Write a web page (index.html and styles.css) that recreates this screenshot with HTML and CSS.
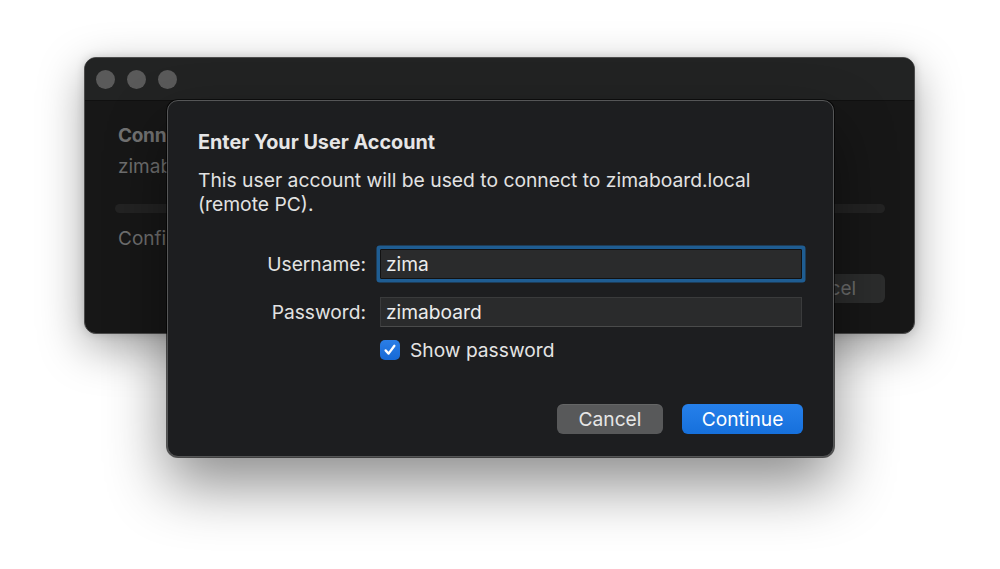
FILE: index.html
```html
<!DOCTYPE html>
<html lang="en">
<head>
<meta charset="utf-8">
<title>Enter Your User Account</title>
<link rel="stylesheet" href="styles.css">
</head>
<body>
<div class="stage">
  <div class="window">
    <div class="titlebar">
      <span class="light"></span><span class="light"></span><span class="light"></span>
    </div>
    <div class="win-body">
      <div class="win-title">Conn</div>
      <div class="win-sub">zimab</div>
      <div class="progress"></div>
      <div class="win-status">Confi</div>
      <div class="win-actions"><span class="win-btn">Cancel</span></div>
    </div>
  </div>

  <div class="dialog">
    <h1 class="dlg-title">Enter Your User Account</h1>
    <p class="dlg-text">This user account will be used to connect to zimaboard.local<br>(remote PC).</p>
    <div class="form">
      <label class="label">Username:</label>
      <div class="field focused">zima</div>
      <label class="label">Password:</label>
      <div class="field">zimaboard</div>
      <span></span>
      <div class="check-row">
        <span class="checkbox">
          <svg width="14" height="14" viewBox="0 0 14 14"><path d="M2.6 7.4 L5.6 10.6 L11.4 2.8" fill="none" stroke="#fff" stroke-width="2.3" stroke-linecap="round" stroke-linejoin="round"/></svg>
        </span>
        <span class="check-label">Show password</span>
      </div>
    </div>
    <div class="actions">
      <span class="btn btn-cancel">Cancel</span>
      <span class="btn btn-primary">Continue</span>
    </div>
  </div>
</div>
</body>
</html>
```

FILE: styles.css
```css
* { box-sizing: border-box; }
html, body { margin: 0; padding: 0; background: #ffffff; }
body {
  font-family: Inter, "Noto Sans", "Liberation Sans", sans-serif;
  width: 1000px;
  height: 569px;
  overflow: hidden;
}
.stage {
  position: relative;
  width: 1000px;
  height: 569px;
}

/* Back window */
.window {
  position: absolute;
  left: 84px;
  top: 57px;
  width: 831px;
  height: 277px;
  border-radius: 12px;
  background: #171717;
  border: 1px solid #4c4c4c;
  box-shadow: 0 14px 45px rgba(0,0,0,0.35), 0 0 10px rgba(0,0,0,0.15);
  overflow: hidden;
  display: flex;
  flex-direction: column;
}
.titlebar {
  height: 43px;
  background: #222323;
  border-bottom: 1px solid #101010;
  display: flex;
  align-items: center;
  gap: 12px;
  padding-left: 11px;
  flex-shrink: 0;
}
.light {
  width: 19px;
  height: 19px;
  border-radius: 50%;
  background: #5a5a5a;
}
.win-body {
  padding: 23px 29px 0 33px;
  display: flex;
  flex-direction: column;
  color: #6f6f6f;
  font-size: 19px;
  white-space: nowrap;
}
.win-title { font-weight: 700; line-height: 24px; color: #727272; letter-spacing: -0.3px; }
.win-sub { margin-top: 7px; line-height: 24px; }
.progress {
  margin-top: 25px;
  margin-left: -3px;
  height: 9px;
  border-radius: 5px;
  background: #232323;
}
.win-status { margin-top: 14px; line-height: 24px; }
.win-actions {
  margin-top: 23px;
  display: flex;
  justify-content: flex-end;
}
.win-btn {
  width: 120px;
  height: 29px;
  border-radius: 6px;
  background: #2c2d2d;
  color: #6d6d6d;
  display: flex;
  align-items: center;
  justify-content: center;
  font-size: 19px;
}

/* Dialog */
.dialog {
  position: absolute;
  left: 167px;
  top: 100px;
  width: 667px;
  height: 357px;
  border-radius: 11px;
  background: #1d1e20;
  border: 1px solid #555657;
  box-shadow: 0 28px 60px rgba(0,0,0,0.45), 0 0 0 1px rgba(0,0,0,0.6);
  padding: 29px 30px 0 30px;
  display: flex;
  flex-direction: column;
  color: #e4e4e4;
}
.dlg-title {
  margin: 0;
  font-size: 19.8px;
  font-weight: 700;
  line-height: 24px;
  color: #e6e6e6;
}
.dlg-text {
  margin: 14px 0 0;
  font-size: 19.3px;
  line-height: 24px;
  color: #e2e2e2;
}
.form {
  margin-top: 33px;
  display: grid;
  grid-template-columns: 168px 422px;
  column-gap: 14px;
  row-gap: 18px;
  align-items: center;
}
.label {
  text-align: right;
  font-size: 19.2px;
  color: #e2e2e2;
}
.field {
  height: 30px;
  background: #2a2b2c;
  border: 1px solid #3a3b3c;
  border-bottom-color: #4a4b4b;
  padding: 0 5px;
  display: flex;
  align-items: center;
  font-size: 19.2px;
  color: #ececec;
}
.field.focused {
  border: 1px solid #121212;
  box-shadow: 0 0 0 3.5px #1f5d92;
  border-radius: 1px;
}
.check-row {
  margin-top: -7px;
  display: flex;
  align-items: center;
  gap: 10px;
}
.checkbox {
  width: 20px;
  height: 20px;
  border-radius: 5px;
  background: linear-gradient(#2b7ee6, #1669d6);
  display: flex;
  align-items: center;
  justify-content: center;
}
.check-label {
  font-size: 19.2px;
  color: #e4e4e4;
}
.actions {
  margin-top: 42px;
  display: flex;
  justify-content: flex-end;
  gap: 19px;
}
.btn {
  height: 30px;
  border-radius: 6px;
  display: flex;
  align-items: center;
  justify-content: center;
  font-size: 19.2px;
}
.btn-cancel {
  width: 106px;
  background: #58595a;
  color: #e6e6e6;
  box-shadow: inset 0 1px 0 rgba(255,255,255,0.08);
}
.btn-primary {
  width: 121px;
  background: linear-gradient(#2680ea, #1670dc);
  color: #ffffff;
}
```
